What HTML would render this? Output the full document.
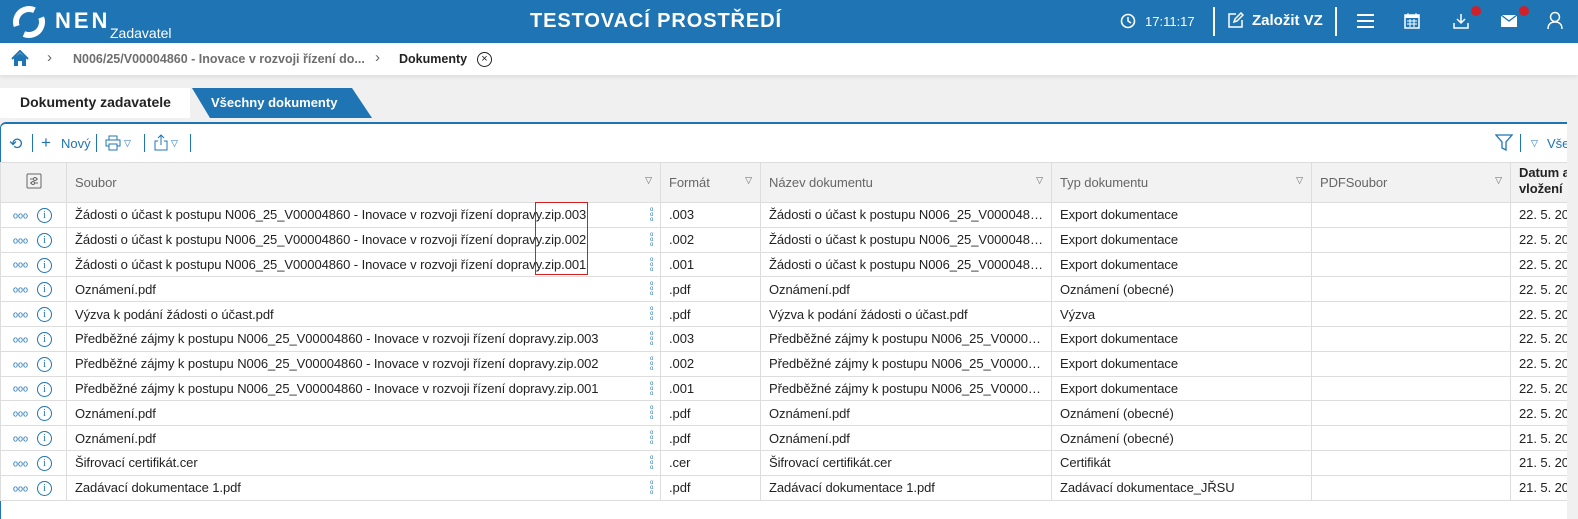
<!DOCTYPE html>
<html><head><meta charset="utf-8">
<style>
*{box-sizing:border-box;margin:0;padding:0}
body{width:1578px;height:519px;overflow:hidden;background:#f0f0f0;font-family:"Liberation Sans",sans-serif;font-size:13px;color:#222;position:relative}
.top{position:absolute;left:0;top:0;width:1578px;height:43px;background:#1f74b3;color:#fff}
.bc{position:absolute;left:0;top:43px;width:1578px;height:32px;background:#fff;box-shadow:0 2px 4px rgba(0,0,0,.08)}
.abs{position:absolute;white-space:nowrap}
.panel{position:absolute;left:0;top:122px;width:1567px;height:397px;background:#fff;border-top:2px solid #1f74b3;border-left:1px solid #1f74b3;border-radius:6px 0 0 0}
table{position:absolute;left:0;top:162px;border-collapse:collapse;table-layout:fixed;width:1590px}
td,th{border:1px solid #ddd;height:24.8px;padding:0 8px;white-space:nowrap;overflow:hidden;text-overflow:ellipsis;font-weight:normal;text-align:left;letter-spacing:-0.07px}
th{height:40px;background:#f2f2f2;color:#666;position:relative}
th .f{position:absolute;right:8px;top:12px;font-size:9px;color:#666}
td.a{padding:0 0 0 12px;color:#1f74b3}
td.c{text-overflow:clip}
.dots{font-size:9px;letter-spacing:0px;color:#1f74b3;vertical-align:middle}
.inf{display:inline-block;width:15px;height:15px;border:1.3px solid #1f74b3;border-radius:50%;font-size:10px;text-align:center;line-height:13px;margin-left:9px;vertical-align:middle;font-family:"Liberation Serif",serif}
.vd{position:absolute;right:6px;top:5px;width:4px;font-size:6px;line-height:5px;color:#1f74b3}
td.s{position:relative}
</style></head><body>
<div class="top">
 <svg class="abs" style="left:12px;top:5px" width="34" height="34" viewBox="0 0 34 34"><circle cx="17" cy="17" r="13" fill="none" stroke="#fff" stroke-width="6" stroke-dasharray="30 11" transform="rotate(-20 17 17)"/></svg>
 <div class="abs" style="left:55px;top:8px;font-size:22px;font-weight:bold;letter-spacing:3px">NEN</div>
 <div class="abs" style="left:110px;top:25px;font-size:14px">Zadavatel</div>
 <div class="abs" style="left:530px;top:10px;font-size:20px;font-weight:bold;letter-spacing:.9px">TESTOVACÍ PROSTŘEDÍ</div>
 <svg class="abs" style="left:1120px;top:13px" width="16" height="16"><circle cx="8" cy="8" r="6.5" fill="none" stroke="#fff" stroke-width="1.6"/><path d="M8 4v4l3 2" stroke="#fff" stroke-width="1.5" fill="none"/></svg>
 <div class="abs" style="left:1145px;top:14px;font-size:13px">17:11:17</div>
 <div class="abs" style="left:1213px;top:7px;width:2px;height:29px;background:#fff"></div>
 <svg class="abs" style="left:1227px;top:12px" width="17" height="17"><path d="M9 2H2v13h13V8M7 10l1-3 6-6 2 2-6 6z" stroke="#fff" stroke-width="1.5" fill="none"/></svg>
 <div class="abs" style="left:1252px;top:12px;font-size:15px;font-weight:bold">Založit VZ</div>
 <div class="abs" style="left:1335px;top:7px;width:2px;height:29px;background:#fff"></div>
 <div class="abs" style="left:1357px;top:14px;width:17px;height:2px;background:#fff;box-shadow:0 6px #fff,0 12px #fff"></div>
 <svg class="abs" style="left:1404px;top:12px" width="16" height="17"><rect x="1" y="3" width="14" height="13" fill="none" stroke="#fff" stroke-width="1.5"/><rect x="1" y="3" width="14" height="3" fill="#fff"/><path d="M4 1v3M12 1v3M3 9h10M3 12h10M6 7v8M10 7v8" stroke="#fff"/></svg>
 <svg class="abs" style="left:1452px;top:12px" width="18" height="18"><path d="M9 2v9M5 7l4 4 4-4M2 11v5h14v-5" stroke="#fff" stroke-width="1.5" fill="none"/></svg>
 <div class="abs" style="left:1471px;top:6px;width:10px;height:10px;border-radius:50%;background:#d0202a"></div>
 <svg class="abs" style="left:1500px;top:14px" width="18" height="14"><rect x="1" y="1" width="16" height="12" fill="#fff"/><path d="M1 1l8 6 8-6" stroke="#1f74b3" stroke-width="1.3" fill="none"/></svg>
 <div class="abs" style="left:1519px;top:6px;width:10px;height:10px;border-radius:50%;background:#d0202a"></div>
 <svg class="abs" style="left:1547px;top:11px" width="16" height="19"><circle cx="8" cy="6" r="4.5" fill="none" stroke="#fff" stroke-width="1.5"/><path d="M1 18c0-5 3-7 7-7s7 2 7 7" fill="none" stroke="#fff" stroke-width="1.5"/></svg>
</div>
<div class="bc">
 <svg class="abs" style="left:11px;top:7px" width="18" height="17"><path d="M1 9L9 1l8 8" stroke="#1f74b3" stroke-width="2" fill="none"/><path d="M3 8v8h4v-5h4v5h4V8L9 3z" fill="#1f74b3"/></svg>
 <div class="abs" style="left:47px;top:6px;color:#666;font-size:15px">›</div>
 <div class="abs" style="left:73px;top:9px;color:#555;font-size:12.5px;font-weight:bold;opacity:.85">N006/25/V00004860 - Inovace v rozvoji řízení do...</div>
 <div class="abs" style="left:375px;top:6px;color:#666;font-size:15px">›</div>
 <div class="abs" style="left:399px;top:9px;font-size:12.5px;font-weight:bold">Dokumenty</div>
 <div class="abs" style="left:477px;top:9px;width:15px;height:15px;border:1.3px solid #222;border-radius:50%;font-size:11px;line-height:12px;text-align:center">×</div>
</div>
<div class="abs" style="left:0;top:88px;width:190px;height:30px;background:#fff"></div>
<div class="abs" style="left:20px;top:94px;font-size:14px;font-weight:bold">Dokumenty zadavatele</div>
<div class="abs" style="left:192px;top:88px;width:180px;height:30px;background:#1f74b3;clip-path:polygon(0 0,160px 0,180px 100%,18px 100%)"></div>
<div class="abs" style="left:211px;top:95px;font-size:13px;font-weight:bold;color:#fff">Všechny dokumenty</div>
<div class="panel"></div>
<div class="abs" style="left:9px;top:134px;font-size:16px;color:#1f74b3">⟲</div>
<div class="abs" style="left:32px;top:134px;width:1px;height:18px;background:#1f74b3"></div>
<div class="abs" style="left:41px;top:133px;font-size:17px;color:#1f74b3">+</div>
<div class="abs" style="left:61px;top:136px;font-size:13px;color:#1f74b3">Nový</div>
<div class="abs" style="left:96px;top:134px;width:1px;height:18px;background:#1f74b3"></div>
<svg class="abs" style="left:105px;top:135px" width="16" height="16"><rect x="4" y="1" width="8" height="4" fill="none" stroke="#1f74b3"/><rect x="1" y="5" width="14" height="6" fill="none" stroke="#1f74b3"/><rect x="4" y="9" width="8" height="6" fill="#fff" stroke="#1f74b3"/></svg>
<div class="abs" style="left:124px;top:138px;font-size:9px;color:#1f74b3">▽</div>
<div class="abs" style="left:144px;top:134px;width:1px;height:18px;background:#1f74b3"></div>
<svg class="abs" style="left:154px;top:134px" width="14" height="17"><path d="M4 7H1v9h12V7h-3M7 11V1M4 4l3-3 3 3" stroke="#1f74b3" fill="none"/></svg>
<div class="abs" style="left:171px;top:138px;font-size:9px;color:#1f74b3">▽</div>
<div class="abs" style="left:190px;top:134px;width:1px;height:18px;background:#1f74b3"></div>
<svg class="abs" style="left:1495px;top:134px" width="18" height="17"><path d="M1 1h16l-6 7v8l-4-2V8z" stroke="#1f74b3" stroke-width="1.3" fill="none"/></svg>
<div class="abs" style="left:1520px;top:134px;width:1px;height:18px;background:#1f74b3"></div>
<div class="abs" style="left:1531px;top:138px;font-size:9px;color:#1f74b3">▽</div>
<div class="abs" style="left:1547px;top:136px;font-size:13px;color:#1f74b3">Vše</div>
<table>
<colgroup><col style="width:66px"><col style="width:594px"><col style="width:100px"><col style="width:291px"><col style="width:260px"><col style="width:199px"><col style="width:80px"></colgroup>
<tr><th><svg style="margin-left:17px" width="16" height="16"><rect x="1" y="1" width="14" height="14" rx="1" fill="none" stroke="#666"/><path d="M4 6h8M4 10h8" stroke="#666"/><circle cx="9" cy="6" r="1.5" fill="#fff" stroke="#666"/><circle cx="7" cy="10" r="1.5" fill="#fff" stroke="#666"/></svg></th><th>Soubor<span class="f">▽</span></th><th>Formát<span class="f">▽</span></th><th>Název dokumentu<span class="f">▽</span></th><th>Typ dokumentu<span class="f">▽</span></th><th>PDFSoubor<span class="f">▽</span></th><th style="color:#222;font-weight:bold;line-height:16px;padding-top:2px;vertical-align:top;text-overflow:clip">Datum a čas<br>vložení</th></tr>
<tr><td class="a"><span class="dots">ooo</span><span class="inf">i</span></td><td class="s">Žádosti o účast k postupu N006_25_V00004860 - Inovace v rozvoji řízení dopravy.zip.003<span class="vd">o<br>o<br>o</span></td><td>.003</td><td>Žádosti o účast k postupu N006_25_V00004860 - Inovace</td><td>Export dokumentace</td><td></td><td class="c">22. 5. 2025</td></tr>
<tr><td class="a"><span class="dots">ooo</span><span class="inf">i</span></td><td class="s">Žádosti o účast k postupu N006_25_V00004860 - Inovace v rozvoji řízení dopravy.zip.002<span class="vd">o<br>o<br>o</span></td><td>.002</td><td>Žádosti o účast k postupu N006_25_V00004860 - Inovace</td><td>Export dokumentace</td><td></td><td class="c">22. 5. 2025</td></tr>
<tr><td class="a"><span class="dots">ooo</span><span class="inf">i</span></td><td class="s">Žádosti o účast k postupu N006_25_V00004860 - Inovace v rozvoji řízení dopravy.zip.001<span class="vd">o<br>o<br>o</span></td><td>.001</td><td>Žádosti o účast k postupu N006_25_V00004860 - Inovace</td><td>Export dokumentace</td><td></td><td class="c">22. 5. 2025</td></tr>
<tr><td class="a"><span class="dots">ooo</span><span class="inf">i</span></td><td class="s">Oznámení.pdf<span class="vd">o<br>o<br>o</span></td><td>.pdf</td><td>Oznámení.pdf</td><td>Oznámení (obecné)</td><td></td><td class="c">22. 5. 2025</td></tr>
<tr><td class="a"><span class="dots">ooo</span><span class="inf">i</span></td><td class="s">Výzva k podání žádosti o účast.pdf<span class="vd">o<br>o<br>o</span></td><td>.pdf</td><td>Výzva k podání žádosti o účast.pdf</td><td>Výzva</td><td></td><td class="c">22. 5. 2025</td></tr>
<tr><td class="a"><span class="dots">ooo</span><span class="inf">i</span></td><td class="s">Předběžné zájmy k postupu N006_25_V00004860 - Inovace v rozvoji řízení dopravy.zip.003<span class="vd">o<br>o<br>o</span></td><td>.003</td><td>Předběžné zájmy k postupu N006_25_V00004860</td><td>Export dokumentace</td><td></td><td class="c">22. 5. 2025</td></tr>
<tr><td class="a"><span class="dots">ooo</span><span class="inf">i</span></td><td class="s">Předběžné zájmy k postupu N006_25_V00004860 - Inovace v rozvoji řízení dopravy.zip.002<span class="vd">o<br>o<br>o</span></td><td>.002</td><td>Předběžné zájmy k postupu N006_25_V00004860</td><td>Export dokumentace</td><td></td><td class="c">22. 5. 2025</td></tr>
<tr><td class="a"><span class="dots">ooo</span><span class="inf">i</span></td><td class="s">Předběžné zájmy k postupu N006_25_V00004860 - Inovace v rozvoji řízení dopravy.zip.001<span class="vd">o<br>o<br>o</span></td><td>.001</td><td>Předběžné zájmy k postupu N006_25_V00004860</td><td>Export dokumentace</td><td></td><td class="c">22. 5. 2025</td></tr>
<tr><td class="a"><span class="dots">ooo</span><span class="inf">i</span></td><td class="s">Oznámení.pdf<span class="vd">o<br>o<br>o</span></td><td>.pdf</td><td>Oznámení.pdf</td><td>Oznámení (obecné)</td><td></td><td class="c">22. 5. 2025</td></tr>
<tr><td class="a"><span class="dots">ooo</span><span class="inf">i</span></td><td class="s">Oznámení.pdf<span class="vd">o<br>o<br>o</span></td><td>.pdf</td><td>Oznámení.pdf</td><td>Oznámení (obecné)</td><td></td><td class="c">21. 5. 2025</td></tr>
<tr><td class="a"><span class="dots">ooo</span><span class="inf">i</span></td><td class="s">Šifrovací certifikát.cer<span class="vd">o<br>o<br>o</span></td><td>.cer</td><td>Šifrovací certifikát.cer</td><td>Certifikát</td><td></td><td class="c">21. 5. 2025</td></tr>
<tr><td class="a"><span class="dots">ooo</span><span class="inf">i</span></td><td class="s">Zadávací dokumentace 1.pdf<span class="vd">o<br>o<br>o</span></td><td>.pdf</td><td>Zadávací dokumentace 1.pdf</td><td>Zadávací dokumentace_JŘSU</td><td></td><td class="c">21. 5. 2025</td></tr>
</table>
<div class="abs" style="left:535px;top:202px;width:53px;height:73px;border:1px solid #d02020"></div>
<div class="abs" style="left:1567px;top:120px;width:11px;height:399px;background:#f0f0f0"></div>
</body></html>
